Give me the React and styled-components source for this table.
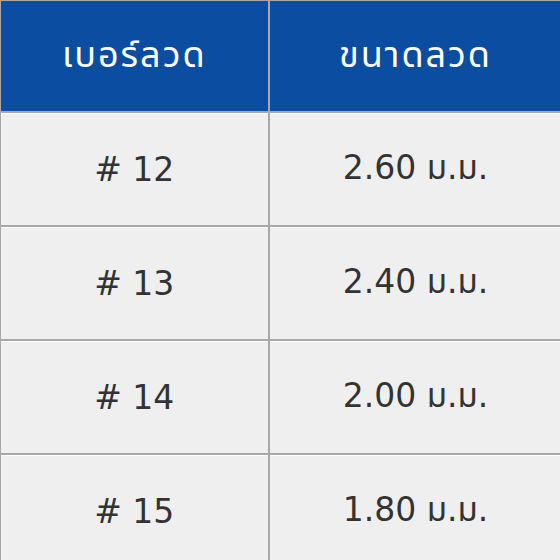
import React from "react";
import styled, { createGlobalStyle } from "styled-components";

const Global = createGlobalStyle`
  html, body { margin: 0; padding: 0; background: #efefef; overflow: hidden; }
  body { width: 560px; height: 560px; }
`;

const Table = styled.table`
  border-collapse: collapse;
  table-layout: fixed;
  width: 563px;
  border-top: 1px solid #a8a8a8;
  border-left: 1px solid #a8a8a8;
`;

const Col = styled.col`
  width: ${(p) => p.$w}px;
`;

const Head = styled.th`
  background: #0a4da1;
  color: #ffffff;
  font-family: "Liberation Sans", "Noto Sans Thai", "Noto Sans", sans-serif;
  font-weight: normal;
  font-size: 36px;
  letter-spacing: 2px;
  height: 110px;
  padding: 0;
  text-align: center;
  border-right: 2px solid #a8a8a8;
  border-bottom: 2px solid #a8a8a8;
`;

const Cell = styled.td`
  background: #efefef;
  color: #333333;
  font-family: "DejaVu Sans", "Noto Sans Thai", sans-serif;
  font-size: 33px;
  height: 112px;
  padding: 0;
  text-align: center;
  border-right: 2px solid #a8a8a8;
  border-bottom: 2px solid #a8a8a8;
  box-shadow: inset 0 1px 0 #ffffff;
`;

const rows = [
  ["# 12", "2.60 ม.ม."],
  ["# 13", "2.40 ม.ม."],
  ["# 14", "2.00 ม.ม."],
  ["# 15", "1.80 ม.ม."],
];

export default function App() {
  return (
    <>
      <Global />
      <Table>
        <colgroup>
          <Col $w={268} />
          <Col $w={294} />
        </colgroup>
        <thead>
          <tr>
            <Head>เบอร์ลวด</Head>
            <Head>ขนาดลวด</Head>
          </tr>
        </thead>
        <tbody>
          {rows.map(([a, b]) => (
            <tr key={a}>
              <Cell>{a}</Cell>
              <Cell>{b}</Cell>
            </tr>
          ))}
        </tbody>
      </Table>
    </>
  );
}
